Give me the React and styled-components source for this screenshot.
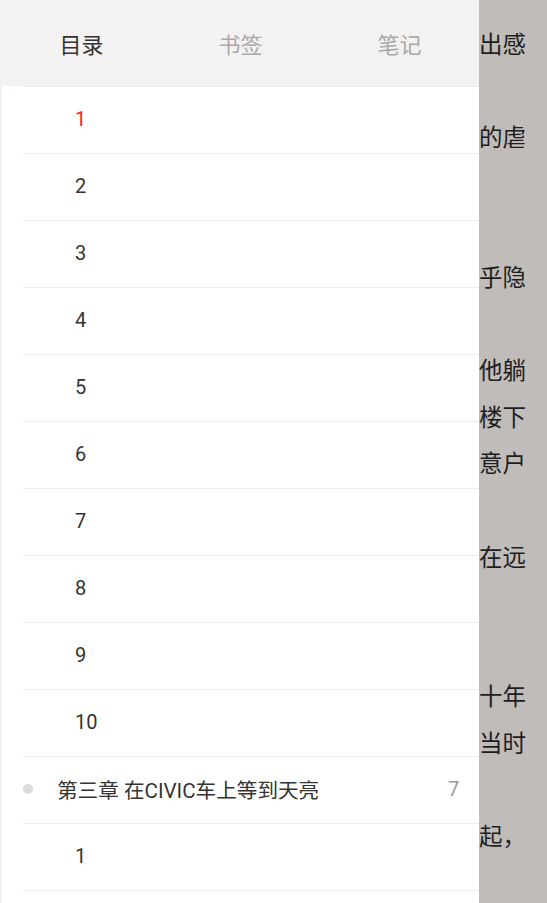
import React from 'react';
import styled, { createGlobalStyle } from 'styled-components';

const GlobalStyle = createGlobalStyle`
  html, body {
    margin: 0;
    padding: 0;
    background: #c0bcb9;
  }
  body {
    font-family: Roboto, "Noto Sans CJK SC", sans-serif;
  }
`;

const tabs = ['目录', '书签', '笔记'];

const items = [
  { label: '1', active: true },
  { label: '2' },
  { label: '3' },
  { label: '4' },
  { label: '5' },
  { label: '6' },
  { label: '7' },
  { label: '8' },
  { label: '9' },
  { label: '10' },
  { label: '第三章 在CIVIC车上等到天亮', chapter: true, count: 7 },
  { label: '1' },
];

// tail ends of the reading page lines that peek out beside the drawer
const readerLines = [
  '出感', '', '的虐', '', '', '乎隐', '', '他躺', '楼下', '意户',
  '', '在远', '', '', '十年', '当时', '', '起，',
];

const App = () => {
  return (
    <>
      <GlobalStyle />
      <Screen>
        <Drawer>
          <TabBar>
            {tabs.map((t, i) => (
              <Tab key={t} selected={i === 0}>{t}</Tab>
            ))}
          </TabBar>
          <List>
            {items.map((item, i) => (
              <Row key={i}>
                {item.chapter ? (
                  <>
                    <Dot />
                    <ChapterTitle>{item.label}</ChapterTitle>
                    <Count>{item.count}</Count>
                  </>
                ) : (
                  <SectionLabel active={item.active}>{item.label}</SectionLabel>
                )}
              </Row>
            ))}
          </List>
        </Drawer>
        <Reader>
          {readerLines.map((line, i) => (
            <ReaderLine key={i}>{line}</ReaderLine>
          ))}
        </Reader>
      </Screen>
    </>
  );
};

export default App;

const Screen = styled.div`
  display: flex;
  width: 547px;
  height: 903px;
  overflow: hidden;
`;

const Drawer = styled.div`
  width: 479px;
  flex-shrink: 0;
  display: flex;
  flex-direction: column;
  background: #fff;
`;

const TabBar = styled.div`
  height: 86px;
  flex-shrink: 0;
  display: grid;
  grid-template-columns: repeat(3, 1fr);
  align-items: center;
  background: #f3f1f2;
  padding-left: 2px;
`;

const Tab = styled.div`
  text-align: center;
  font-size: 22px;
  color: ${props => (props.selected ? '#333' : '#a9a9a9')};
`;

const List = styled.div`
  flex: 1;
  border-left: 2px solid #f3f1f2;
  padding-left: 21px;
  overflow: hidden;
`;

const Row = styled.div`
  height: 63px;
  padding-bottom: 3px;
  display: flex;
  align-items: center;
  border-top: 1px solid #ececec;
  &:last-child {
    border-bottom: 1px solid #ececec;
  }
`;

const SectionLabel = styled.span`
  padding-left: 52px;
  font-size: 20px;
  color: ${props => (props.active ? '#ff1a1a' : '#333')};
`;

const Dot = styled.span`
  width: 10px;
  height: 10px;
  border-radius: 50%;
  background: #dcdcdc;
  flex-shrink: 0;
`;

const ChapterTitle = styled.span`
  flex: 1;
  margin-left: 24px;
  font-size: 20.6px;
  color: #333;
  white-space: nowrap;
`;

const Count = styled.span`
  width: 31px;
  font-size: 20px;
  color: #999;
`;

const Reader = styled.div`
  flex: 1;
  background: #c0bcb9;
  padding-top: 20px;
  overflow: hidden;
`;

const ReaderLine = styled.div`
  height: 46.6px;
  line-height: 46.6px;
  font-size: 23.5px;
  color: #1e1e1e;
  white-space: nowrap;
  font-family: "Noto Sans CJK SC", sans-serif;
`;
